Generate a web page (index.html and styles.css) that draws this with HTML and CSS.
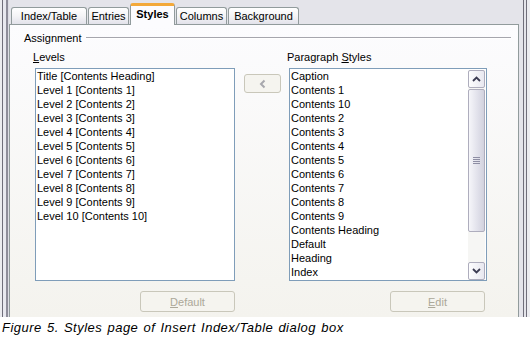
FILE: index.html
```html
<!DOCTYPE html>
<html lang="en">
<head>
  <meta charset="UTF-8" />
  <title>Styles page of Insert Index/Table dialog box</title>
  <link rel="stylesheet" href="styles.css">
</head>
<body>
  <div class="shot">
    <div class="dialog">
      <div class="tabs">
        <div class="tab tab-index">Index/Table</div>
        <div class="tab tab-entries">Entries</div>
        <div class="tab tab-styles active">Styles</div>
        <div class="tab tab-columns">Columns</div>
        <div class="tab tab-background">Background</div>
      </div>
      <div class="page">
        <div class="group-title">
          <span>Assignment</span>
          <i class="rule"></i>
        </div>
        <div class="columns">
          <div class="col col-levels">
            <div class="label"><u>L</u>evels</div>
            <div class="listbox">
              <ul class="items">
                <li>Title [Contents Heading]</li>
                <li>Level 1 [Contents 1]</li>
                <li>Level 2 [Contents 2]</li>
                <li>Level 3 [Contents 3]</li>
                <li>Level 4 [Contents 4]</li>
                <li>Level 5 [Contents 5]</li>
                <li>Level 6 [Contents 6]</li>
                <li>Level 7 [Contents 7]</li>
                <li>Level 8 [Contents 8]</li>
                <li>Level 9 [Contents 9]</li>
                <li>Level 10 [Contents 10]</li>
              </ul>
            </div>
            <button class="btn btn-default" disabled><u>D</u>efault</button>
          </div>
          <div class="mid">
            <button class="btn btn-arrow" disabled>
              <svg width="10" height="10" viewBox="0 0 10 10">
                <path d="M6.5 1.5 L3 5 L6.5 8.5" fill="none" stroke="#a7a7ad" stroke-width="2"/>
              </svg>
            </button>
          </div>
          <div class="col col-styles">
            <div class="label">Paragraph <u>S</u>tyles</div>
            <div class="listbox has-scroll">
              <ul class="items">
                <li>Caption</li>
                <li>Contents 1</li>
                <li>Contents 10</li>
                <li>Contents 2</li>
                <li>Contents 3</li>
                <li>Contents 4</li>
                <li>Contents 5</li>
                <li>Contents 6</li>
                <li>Contents 7</li>
                <li>Contents 8</li>
                <li>Contents 9</li>
                <li>Contents Heading</li>
                <li>Default</li>
                <li>Heading</li>
                <li>Index</li>
              </ul>
              <div class="scrollbar">
                <div class="sb-btn">
                  <svg width="9" height="6" viewBox="0 0 9 6">
                    <path d="M1 5 L4.5 1.5 L8 5" fill="none" stroke="#3c3c52" stroke-width="1.8"/>
                  </svg>
                </div>
                <div class="sb-thumb"><i class="grip"></i></div>
                <div class="sb-track"></div>
                <div class="sb-btn">
                  <svg width="9" height="6" viewBox="0 0 9 6">
                    <path d="M1 1 L4.5 4.5 L8 1" fill="none" stroke="#3c3c52" stroke-width="1.8"/>
                  </svg>
                </div>
              </div>
            </div>
            <button class="btn btn-edit" disabled><u>E</u>dit</button>
          </div>
        </div>
      </div>
    </div>
    <p class="caption">Figure 5. Styles page of Insert Index/Table dialog box</p>
  </div>
</body>
</html>
```

FILE: styles.css
```css
body {
  margin: 0;
  background: #ffffff;
  font-family: 'Liberation Sans', Arial, sans-serif;
  font-size: 11px;
  color: #000;
}
.shot {
  width: 530px;
  height: 341px;
  overflow: hidden;
}
.dialog {
  height: 317px;
  box-sizing: border-box;
  padding: 0 11px 0 9px;
  display: flex;
  flex-direction: column;
  background:
    linear-gradient(to right, #ececf0 0 2px, #6f6e7a 2px 3px, #e8e8ef 3px 6px, #8e8d9a 6px 8px, #dcdce4 8px 9px) left top / 9px 100% no-repeat,
    linear-gradient(to right, #e4e4ea 0 4px, #6f6e7a 4px 5px, #e4e4ea 5px 7px, #6f6e7a 7px 8px, #ececf0 8px 11px) right top / 11px 100% no-repeat,
    #e4e4ea;
}

/* tabs */
.tabs {
  height: 24px;
  display: flex;
  align-items: flex-end;
  padding-left: 2px;
  position: relative;
  z-index: 2;
}
.tab {
  height: 17px;
  box-sizing: border-box;
  margin-right: 1px;
  border: 1px solid #919b9c;
  border-bottom: none;
  border-radius: 3px 3px 0 0;
  background: linear-gradient(#ffffff, #f4f4f6 50%, #e2e2ea);
  text-align: center;
  line-height: 16px;
}
.tab-index { width: 76px; }
.tab-entries { width: 41px; }
.tab-columns { width: 51px; }
.tab-background { width: 71px; }
.tab.active {
  width: 45px;
  height: 22px;
  margin-bottom: -1px;
  border-top: 3px solid #f3a93a;
  background: #fcfcfe;
  font-weight: bold;
  line-height: 17px;
}

/* page */
.page {
  flex: 1;
  border: 1px solid #919b9c;
  border-bottom: none;
  background: linear-gradient(#fcfcfe, #f4f3ee);
}
.group-title {
  display: flex;
  align-items: center;
  margin-top: 6px;
  padding-left: 14px;
  line-height: 14px;
}
.group-title .rule {
  flex: 0 0 425px;
  margin-left: 5px;
  border-top: 1px solid #a6a6ad;
  border-bottom: 1px solid #ffffff;
}
.columns {
  display: flex;
  margin-top: 5px;
  padding-left: 25px;
}
.col {
  display: flex;
  flex-direction: column;
}
.col-levels { width: 200px; }
.col-styles { width: 198px; }
.label {
  line-height: 14px;
  margin: 0 0 4px -2px;
}
.listbox {
  height: 213px;
  box-sizing: border-box;
  border: 1px solid #7f9db9;
  background: #ffffff;
  display: flex;
}
.items {
  list-style: none;
  margin: 0;
  padding: 0 0 0 1px;
  flex: 1;
  line-height: 14px;
  white-space: nowrap;
  overflow: hidden;
}
.mid {
  width: 37px;
  margin: 0 8px 0 9px;
  padding-top: 24px;
}

/* buttons */
.btn {
  font-family: inherit;
  font-size: 11px;
  color: #aca899;
  background: #f5f4ef;
  border: 1px solid #c9c7ba;
  border-radius: 3px;
  padding: 0;
  box-sizing: border-box;
}
.btn-arrow {
  width: 37px;
  height: 19px;
  display: flex;
  align-items: center;
  justify-content: center;
}
.btn-default,
.btn-edit {
  width: 95px;
  height: 21px;
  margin-top: 10px;
  align-self: flex-end;
}
.btn-edit { margin-right: 2px; }

/* scrollbar */
.scrollbar {
  width: 17px;
  margin: 1px 1px 0 0;
  display: flex;
  flex-direction: column;
  background: #f6f6f4;
}
.sb-btn {
  height: 18px;
  box-sizing: border-box;
  border: 1px solid #aeadbd;
  border-radius: 2px;
  background: linear-gradient(to right, #fdfdfe, #e8e8f0);
  display: flex;
  align-items: center;
  justify-content: center;
}
.sb-thumb {
  height: 143px;
  box-sizing: border-box;
  margin-top: 1px;
  border: 1px solid #aeadbd;
  border-radius: 2px;
  background: linear-gradient(to right, #f6f6fa, #e0e0ea 60%, #d2d2de);
  display: flex;
  align-items: center;
  justify-content: center;
}
.grip {
  width: 7px;
  height: 7px;
  background: repeating-linear-gradient(#8e8ea4 0 1px, transparent 1px 2px);
}
.sb-track { flex: 1; }

.caption {
  margin: 0;
  padding: 2px 0 0 2px;
  font-style: italic;
  font-size: 13px;
  line-height: 17px;
  letter-spacing: 0.5px;
  word-spacing: 1px;
}
```
